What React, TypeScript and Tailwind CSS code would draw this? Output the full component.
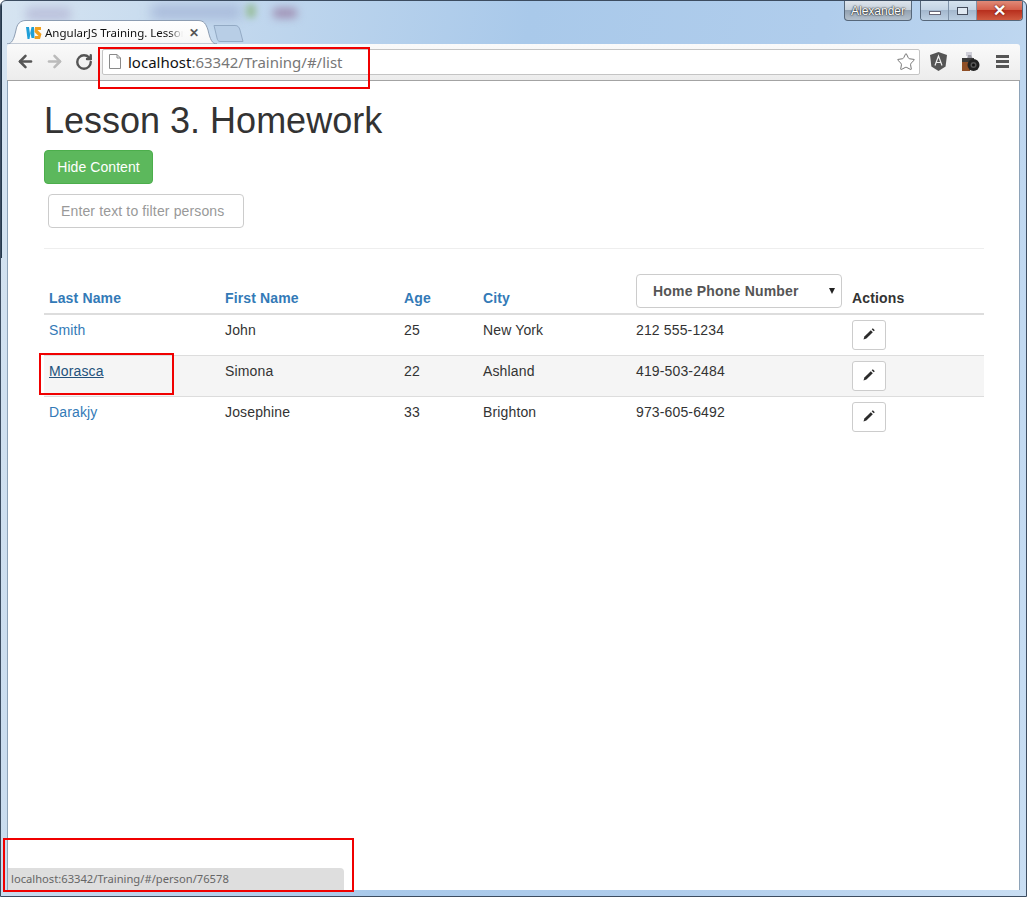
import { ArrowLeft, ArrowRight, RotateCw, Star } from "lucide-react";

const PERSONS = [
  { last: "Smith", first: "John", age: 25, city: "New York", phone: "212 555-1234" },
  { last: "Morasca", first: "Simona", age: 22, city: "Ashland", phone: "419-503-2484" },
  { last: "Darakjy", first: "Josephine", age: 33, city: "Brighton", phone: "973-605-6492" },
];

function PencilIcon() {
  return (
    <svg className="mb-[2px]" width="14" height="14" viewBox="0 0 14 14">
      <path d="M1.5 12.5 L2.4 9.6 L8.8 3.2 L10.8 5.2 L4.4 11.6 Z" fill="#2b2b2b" />
      <path d="M9.7 2.3 L10.8 1.2 L12.8 3.2 L11.7 4.3 Z" fill="#2b2b2b" />
    </svg>
  );
}

function WsLogo() {
  return (
    <svg width="16" height="14" viewBox="0 0 16 14">
      <path d="M0 1 H3 L4 8 L5.5 1 H8 L8.5 12 H5.5 L4.5 7 L3.5 13 H1.5 Z" fill="#1f9fd8" />
      <path d="M9 1 H15 L15 4 H11.5 L15.5 8 L14 13 H8.5 L9 10 H12.5 L8.5 6 Z" fill="#f0a020" />
    </svg>
  );
}

function AngularIcon() {
  return (
    <svg width="17" height="19" viewBox="0 0 17 19">
      <path d="M8.5 0 L17 3 L15.6 14.5 L8.5 19 L1.4 14.5 L0 3 Z" fill="#555" />
      <path d="M5 13.5 L8.5 4 L12 13.5 M6.2 10.5 H10.8" fill="none" stroke="#eee" strokeWidth="1.2" />
    </svg>
  );
}

function CameraIcon() {
  return (
    <svg width="19" height="20" viewBox="0 0 19 20">
      <rect x="5" y="0" width="6" height="4" fill="#cfcfd8" />
      <path d="M7 3 H10 L12 7 H6 Z" fill="#9a9aa4" />
      <rect x="1" y="9" width="8" height="10" fill="#8f4f26" />
      <rect x="1" y="6" width="12" height="4" fill="#3a3a3a" />
      <circle cx="12.5" cy="13" r="6" fill="#222" />
      <circle cx="12.5" cy="13" r="3" fill="#555" />
      <circle cx="12.5" cy="13" r="1.5" fill="#111" />
    </svg>
  );
}

function RedBox({ className }: { className: string }) {
  return <div className={`pointer-events-none absolute border-2 border-[#f00000] ${className}`} />;
}

export default function App() {
  return (
    <div className="relative flex h-[897px] w-[1027px] flex-col overflow-hidden rounded-t-md border border-[#3c4c60] bg-[linear-gradient(100deg,#d6e4f1_0%,#c4d9ee_18%,#a9c9ea_45%,#b0cdec_70%,#c9def3_100%)] font-['Liberation_Sans',sans-serif]">
      {/* blurred desktop behind the glass */}
      <div className="absolute left-[25px] top-[6px] h-[14px] w-[45px] rounded bg-[#bcc2dc] blur-[5px]" />
      <div className="absolute left-[150px] top-[4px] h-[14px] w-[90px] rounded bg-[#a8bada] blur-[6px]" />
      <div className="absolute left-[245px] top-[3px] h-[14px] w-[10px] rounded bg-[#9cc0a4] blur-[3px]" />
      <div className="absolute left-[272px] top-[7px] h-[10px] w-[24px] rounded bg-[#a090b4] blur-[4px]" />
      <div className="absolute left-[-1px] top-0 h-[257px] w-[2px] bg-[#24384c]" />

      {/* title bar */}
      <div className="relative flex h-[19px] shrink-0 justify-end gap-[8px] pr-[3px]">
        <div className="flex h-[20px] w-[68px] items-center justify-center rounded-b-[4px] border border-t-0 border-[#56677a] bg-[linear-gradient(#dde4ec,#c8d2dc_45%,#93a2b2_50%,#b4c0cc)] text-[12px] text-white [text-shadow:0_0_2px_#111,0_0_1px_#111]">
          Alexander
        </div>
        <div className="flex h-[20px] w-[103px] overflow-hidden rounded-b-[4px] border border-t-0 border-[#56677a]">
          <div className="flex w-[28px] items-end justify-center border-r border-[#7f92a8] bg-[linear-gradient(#d5e2ee,#c4d4e4_45%,#a4b8ce_50%,#bccfe2)] pb-[5px]">
            <div className="h-[4px] w-[12px] border border-[#667] bg-white" />
          </div>
          <div className="flex w-[28px] items-center justify-center border-r border-[#7f92a8] bg-[linear-gradient(#d5e2ee,#c4d4e4_45%,#a4b8ce_50%,#bccfe2)]">
            <div className="h-[8px] w-[11px] border border-[#444c5c] bg-[#dfe8f2]" />
          </div>
          <div className="flex flex-1 items-center justify-center bg-[linear-gradient(#e08a78,#d4604c_45%,#b8301e_50%,#d05a40)] text-[16px] font-bold leading-none text-white [text-shadow:0_0_2px_#400]">
            ✕
          </div>
        </div>
      </div>

      {/* tab strip */}
      <div className="relative flex h-[24px] shrink-0 items-end pl-[6px]">
        <div className="relative h-[24px] w-[210px]">
          <svg className="absolute inset-0" width="210" height="24" viewBox="0 0 210 24">
            <defs>
              <linearGradient id="tabfill" x1="0" y1="0" x2="0" y2="1">
                <stop offset="0" stopColor="#ffffff" />
                <stop offset="1" stopColor="#f7f7f7" />
              </linearGradient>
            </defs>
            <path
              d="M0 24 C5 24 7 19 9 10 C10 4 13 .5 19 .5 L191 .5 C197 .5 199 4 201 10 C203 19 205 24 210 24 Z"
              fill="url(#tabfill)"
              stroke="#8d9db2"
            />
          </svg>
          <div className="relative flex h-full items-center pl-[19px] pt-[1px]">
            <WsLogo />
            <span className="ml-[3px] w-[138px] overflow-hidden whitespace-nowrap font-['Noto_Sans',sans-serif] text-[11.5px] text-[#111] [mask-image:linear-gradient(to_right,black_90%,transparent)]">
              AngularJS Training. Lesson 3
            </span>
            <span className="ml-[6px] text-[12px] font-bold text-[#555]">✕</span>
          </div>
        </div>
        <svg className="mb-[2px] -ml-[4px]" width="31" height="17" viewBox="0 0 31 17">
          <path d="M1 .5 H22 C25 .5 26 2 27 5 L30 16.5 H7 C5 16.5 4.5 15 4 13 Z" fill="#b8cee6" stroke="#93aac4" />
        </svg>
      </div>

      {/* toolbar */}
      <div className="relative mx-[6px] flex h-[37px] shrink-0 items-center rounded-t-[3px] border-b border-[#a3a3a3] bg-[linear-gradient(#fafafa,#ececec)] pb-[1px]">
        <ArrowLeft className="ml-[9px] text-[#555]" size={19} strokeWidth={3.2} />
        <ArrowRight className="ml-[10px] text-[#bbb]" size={19} strokeWidth={3.2} />
        <RotateCw className="ml-[11px] text-[#555]" size={18} strokeWidth={3.2} />
        <div className="ml-[9px] flex h-[26px] w-[818px] items-center rounded-[2px] border border-[#c4c4c4] bg-white">
          <svg className="ml-[6px]" width="12" height="15" viewBox="0 0 12 15">
            <path d="M.5 .5 H8 L11.5 4 V14.5 H.5 Z M8 .5 V4 H11.5" fill="#fff" stroke="#8a8a8a" />
          </svg>
          <span className="ml-[7px] pt-[1px] font-['Noto_Sans',sans-serif] text-[15px] text-[#111]">
            localhost<span className="text-[#777]">:63342/Training/#/list</span>
          </span>
          <Star className="ml-auto mr-[3px] text-[#777]" size={20} strokeWidth={1.2} />
        </div>
        <div className="ml-[10px]">
          <AngularIcon />
        </div>
        <div className="ml-[14px]">
          <CameraIcon />
        </div>
        <div className="ml-[16px] flex flex-col gap-[2px]">
          <div className="h-[3px] w-[13px] bg-[#555]" />
          <div className="h-[3px] w-[13px] bg-[#555]" />
          <div className="h-[3px] w-[13px] bg-[#555]" />
        </div>
      </div>

      {/* page */}
      <div className="relative mx-[6px] h-[809px] shrink-0 border-x border-[#8ea3b8] bg-white pl-[36px] pr-[35px] pt-[20px] text-[14px] text-[#333]">
        <h1 className="text-[36px] leading-[40px] text-[#333]">Lesson 3. Homework</h1>
        <button className="mt-[9px] block h-[34px] w-[109px] rounded border border-[#4cae4c] bg-[#5cb85c] tracking-[0.06px] text-white">
          Hide Content
        </button>
        <input
          placeholder="Enter text to filter persons"
          className="ml-[4px] mt-[10px] block h-[34px] w-[196px] rounded border border-[#ccc] px-[12px] text-[14px] tracking-[0.14px] placeholder:text-[#999]"
        />
        <hr className="mt-[20px] border-[#eee]" />
        <table className="mt-[20px] w-[940px] table-fixed border-collapse text-left tracking-[0.14px]">
          <thead>
            <tr className="border-b-2 border-[#ddd] align-bottom font-bold">
              <th className="w-[176px] px-[5px] pb-[4px] pt-[6px] text-[#337ab7]">Last Name</th>
              <th className="w-[179px] px-[5px] pb-[4px] pt-[6px] text-[#337ab7]">First Name</th>
              <th className="w-[79px] px-[5px] pb-[4px] pt-[6px] text-[#337ab7]">Age</th>
              <th className="w-[153px] px-[5px] pb-[4px] pt-[6px] text-[#337ab7]">City</th>
              <th className="w-[216px] p-[5px]">
                <div className="relative flex h-[34px] w-[206px] items-center rounded border border-[#ccc] pl-[16px] tracking-[0.2px] text-[#555]">
                  Home Phone Number
                  <div className="absolute right-[6px] top-[13px] h-0 w-0 border-x-[3px] border-t-[6px] border-x-transparent border-t-[#222]" />
                </div>
              </th>
              <th className="w-[137px] px-[5px] pb-[4px] pt-[6px]">Actions</th>
            </tr>
          </thead>
          <tbody>
            {PERSONS.map((p, i) => (
              <tr key={p.last} className={`border-t border-[#ddd] align-top ${i === 1 ? "bg-[#f5f5f5]" : ""}`}>
                <td className="p-[5px]">
                  <a className={i === 1 ? "text-[#23527c] underline" : "text-[#337ab7]"}>{p.last}</a>
                </td>
                <td className="p-[5px]">{p.first}</td>
                <td className="p-[5px]">{p.age}</td>
                <td className="p-[5px]">{p.city}</td>
                <td className="p-[5px]">{p.phone}</td>
                <td className="p-[5px]">
                  <button className="flex h-[30px] w-[34px] items-center justify-center rounded-[3px] border border-[#ccc] bg-white">
                    <PencilIcon />
                  </button>
                </td>
              </tr>
            ))}
          </tbody>
        </table>

        {/* status bubble */}
        <div className="absolute bottom-0 left-0 flex h-[22px] w-[336px] items-center rounded-tr-[4px] bg-[#dedede] pl-[3px] font-['Noto_Sans',sans-serif] text-[11.2px] text-[#666]">
          localhost:63342/Training/#/person/76578
        </div>
      </div>

      <RedBox className="left-[97px] top-[46px] h-[42px] w-[272px]" />
      <RedBox className="left-[38px] top-[352px] h-[42px] w-[135px]" />
      <RedBox className="left-[2px] top-[837px] h-[54px] w-[351px]" />
    </div>
  );
}
